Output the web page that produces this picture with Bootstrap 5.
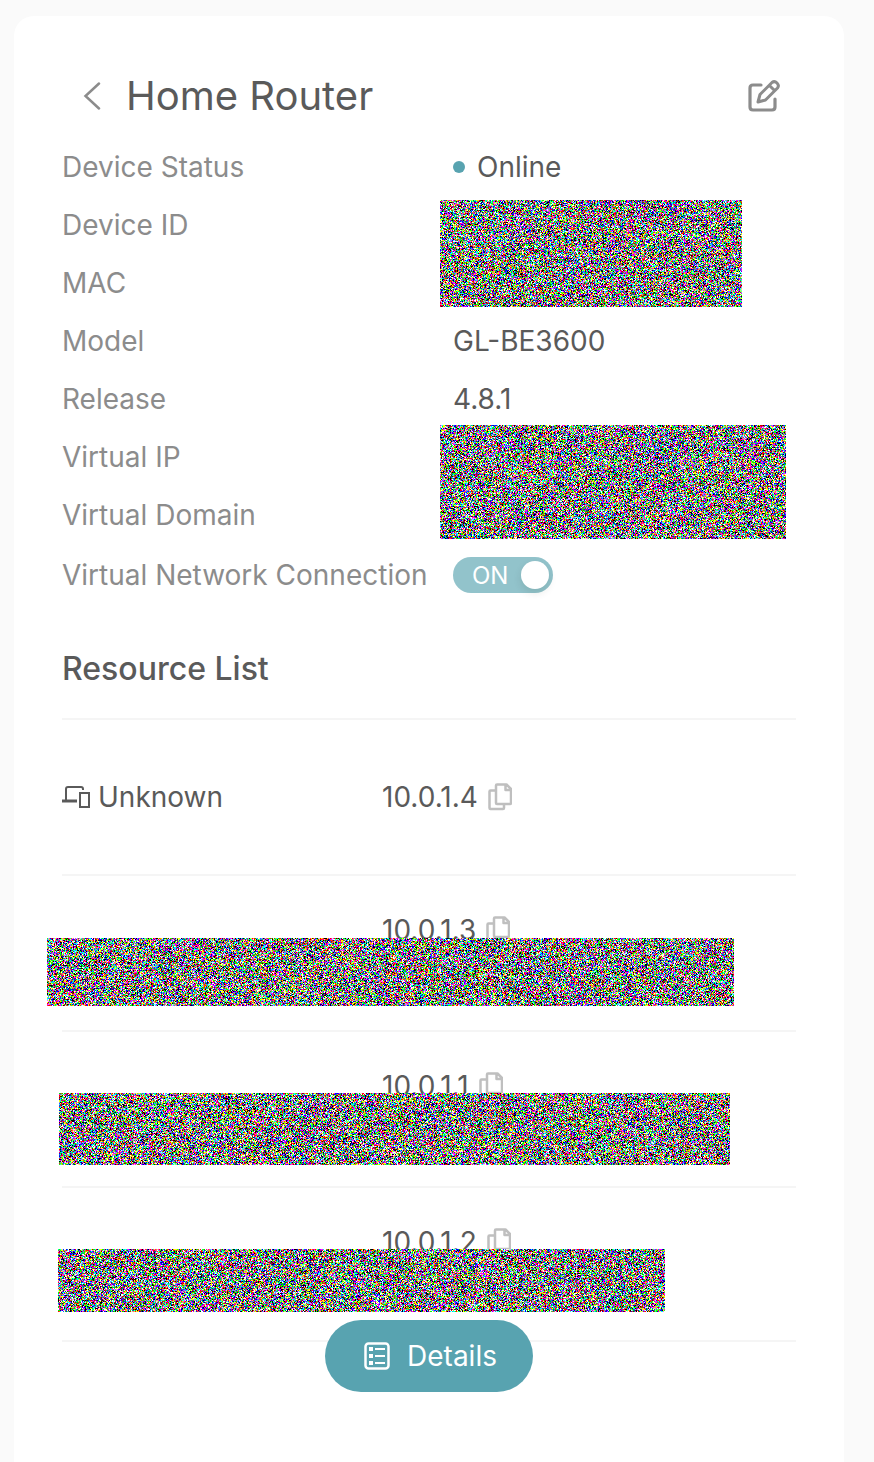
<!DOCTYPE html>
<html lang="en">
<head>
<meta charset="utf-8">
<meta name="viewport" content="width=device-width, initial-scale=1">
<title>Home Router</title>
<link href="https://cdn.jsdelivr.net/npm/bootstrap@5.3.0/dist/css/bootstrap.min.css" rel="stylesheet">
<style>
  body { background: #fafafa; color: #5a5a5a; font-family: Inter, "Liberation Sans", sans-serif; font-size: 28px; line-height: 34px; }
  .panel { margin: 16px 30px 0 14px; padding: 48px; background: #fff; border-radius: 20px 20px 0 0; min-height: calc(100vh - 16px); }
  .panel-head { height: 64px; margin-bottom: 10px; padding: 0 15px 0 20px; }
  .panel-head h1 { font-size: 40px; font-weight: 400; line-height: 48px; margin: 0 0 0 24px; }
  .icon-btn { display: flex; padding: 0; border: 0; background: none; color: #8c8c8c; }
  .info-row { display: flex; align-items: center; height: 58px; }
  .info-row dt { flex: 0 0 391px; font-weight: 400; color: #8c8c8c; white-space: nowrap; }
  .info-row dd { margin: 0; }
  .info-row-switch { height: 62px; }
  .dot { width: 12px; height: 12px; margin-right: 12px; border-radius: 50%; background: #58a3b0; }
  .vpn-switch { display: block; position: relative; width: 100px; height: 36px; }
  .vpn-switch input { appearance: none; display: block; width: 100%; height: 100%; margin: 0; border-radius: 18px; background: #92c3cb; }
  .vpn-switch input::after { content: ""; position: absolute; top: 4px; right: 4px; width: 28px; height: 28px; border-radius: 50%; background: #fff; box-shadow: 0 4px 8px rgba(0, 35, 11, .1); }
  .vpn-switch span { position: absolute; left: 19px; top: 2px; font-size: 24px; color: #fff; }
  .section-title { margin: 43px 0 0; font-size: 32px; font-weight: 500; line-height: 40px; }
  .res-list { margin: 29px 0 0; padding: 0; list-style: none; }
  .res-row { position: relative; display: flex; height: 156px; border-top: 2px solid #f5f5f5; }
  .res-row:last-child { border-bottom: 2px solid #f5f5f5; }
  .res-name { flex: 0 0 320px; }
  .res-name svg { margin-right: 8px; }
  .res-row.full { align-items: center; }
  .res-row.part { align-items: flex-start; padding-top: 37px; }
  .copy { align-items: center; height: 34px; color: #bfbfbf; margin-left: 10px; }
  .mask { position: absolute; display: block; }
  .mask-id { left: 378px; top: 62px; width: 302px; height: 107px; }
  .mask-ip { left: 378px; top: 287px; width: 346px; height: 114px; }
  .mask-a { left: -15px; top: 62px; width: 687px; height: 68px; }
  .mask-b { left: -3px; top: 61px; width: 671px; height: 72px; }
  .mask-c { left: -4px; top: 61px; width: 607px; height: 63px; }
  .details { position: sticky; bottom: 70px; z-index: 2; width: 208px; height: 72px; margin: -22px auto 0; padding: 0 0 0 2px; border: 0; border-radius: 36px; background: #58a3b0; color: #fff; }
</style>
</head>
<body>
<svg class="d-none" aria-hidden="true">
  <symbol id="copy" viewBox="0 0 24 28"><path d="M7 7.500H2.500Q1.500 7.500 1.500 8.500V25Q1.500 26 2.500 26H15Q16 26 16 25V21.500M9 1.500H18.500L23 6V20Q23 21 22 21H9Q8 21 8 20V2.500Q8 1.500 9 1.500ZM17.500 2V7H22.500" fill="none" stroke="currentColor" stroke-width="2.500" stroke-linejoin="round"/></symbol>
</svg>
<main class="panel">
  <header class="panel-head d-flex align-items-center">
    <button class="icon-btn" type="button" aria-label="Back"><svg width="20" height="28" viewBox="0 0 20 28" fill="none" stroke="currentColor" stroke-width="2.500" stroke-linecap="round"><path d="M17 1.500 3.500 14 17 26.500"/></svg></button>
    <h1>Home Router</h1>
    <button class="icon-btn ms-auto" type="button" aria-label="Edit"><svg width="34" height="34" viewBox="0 0 34 34" fill="none" stroke="currentColor" stroke-width="3.200" stroke-linecap="round" stroke-linejoin="round"><path d="M14 6H6Q3 6 3 9V28Q3 31 6 31H25Q28 31 28 28V20"/><path d="M11 23 13 15.500 25 3.500Q27.500 1.500 30 4Q32.500 6.500 30.500 9L18.500 21ZM22.500 6.500 27.500 11.500" stroke-width="3"/></svg></button>
  </header>
  <dl class="position-relative mb-0">
    <div class="info-row"><dt>Device Status</dt><dd class="d-flex align-items-center"><span class="dot"></span>Online</dd></div>
    <div class="info-row"><dt>Device ID</dt><dd></dd></div>
    <div class="info-row"><dt>MAC</dt><dd></dd></div>
    <div class="info-row"><dt>Model</dt><dd>GL-BE3600</dd></div>
    <div class="info-row"><dt>Release</dt><dd>4.8.1</dd></div>
    <div class="info-row"><dt>Virtual IP</dt><dd></dd></div>
    <div class="info-row"><dt>Virtual Domain</dt><dd></dd></div>
    <div class="info-row info-row-switch"><dt id="vnc">Virtual Network Connection</dt><dd><label class="vpn-switch"><input type="checkbox" role="switch" checked aria-labelledby="vnc"><span>ON</span></label></dd></div>
    <canvas class="mask mask-id"></canvas>
    <canvas class="mask mask-ip"></canvas>
  </dl>
  <h2 class="section-title">Resource List</h2>
  <ul class="res-list">
    <li class="res-row full">
      <div class="res-name d-flex align-items-center"><svg width="28" height="24" viewBox="0 0 28 24" fill="none" stroke="currentColor" stroke-width="2"><path d="M4 16V4Q4 2 6 2H19Q21 2 21 4V5"/><path d="M0 16H15" stroke-width="3"/><path d="M18 8H27V22H18Z"/></svg>Unknown</div>
      <span>10.0.1.4</span><button class="icon-btn copy" type="button" aria-label="Copy 10.0.1.4"><svg width="24" height="28"><use href="#copy"/></svg></button>
    </li>
    <li class="res-row part"><div class="res-name"></div><span>10.0.1.3</span><button class="icon-btn copy" type="button" aria-label="Copy 10.0.1.3"><svg width="24" height="28"><use href="#copy"/></svg></button><canvas class="mask mask-a"></canvas></li>
    <li class="res-row part"><div class="res-name"></div><span>10.0.1.1</span><button class="icon-btn copy" type="button" aria-label="Copy 10.0.1.1"><svg width="24" height="28"><use href="#copy"/></svg></button><canvas class="mask mask-b"></canvas></li>
    <li class="res-row part"><div class="res-name"></div><span>10.0.1.2</span><button class="icon-btn copy" type="button" aria-label="Copy 10.0.1.2"><svg width="24" height="28"><use href="#copy"/></svg></button><canvas class="mask mask-c"></canvas></li>
  </ul>
  <button class="details d-flex align-items-center justify-content-center gap-3" type="button"><svg width="28" height="30" viewBox="0 0 28 30" fill="none" stroke="currentColor" stroke-width="2.500"><rect x="2.500" y="2.500" width="23" height="25" rx="3"/><path d="M6 8H10M6 15H10M6 22H10" stroke-width="4"/><path d="M12 8H22M12 15H22M12 22H22" stroke-width="2"/></svg>Details</button>
</main>
<script src="https://cdn.jsdelivr.net/npm/bootstrap@5.3.0/dist/js/bootstrap.bundle.min.js"></script>
<script>
  // Fill each privacy mask with random colour noise at its displayed size
  document.querySelectorAll('.mask').forEach(function (c) {
    c.width = c.clientWidth;
    c.height = c.clientHeight;
    var ctx = c.getContext('2d'), im = ctx.createImageData(c.width, c.height), d = im.data;
    for (var i = 0; i < d.length; i++) {
      d[i] = i % 4 === 3 ? 255 : Math.max(0, Math.min(255, 128 + (Math.random() - 0.5) * 1000));
    }
    ctx.putImageData(im, 0, 0);
  });
</script>
</body>
</html>
